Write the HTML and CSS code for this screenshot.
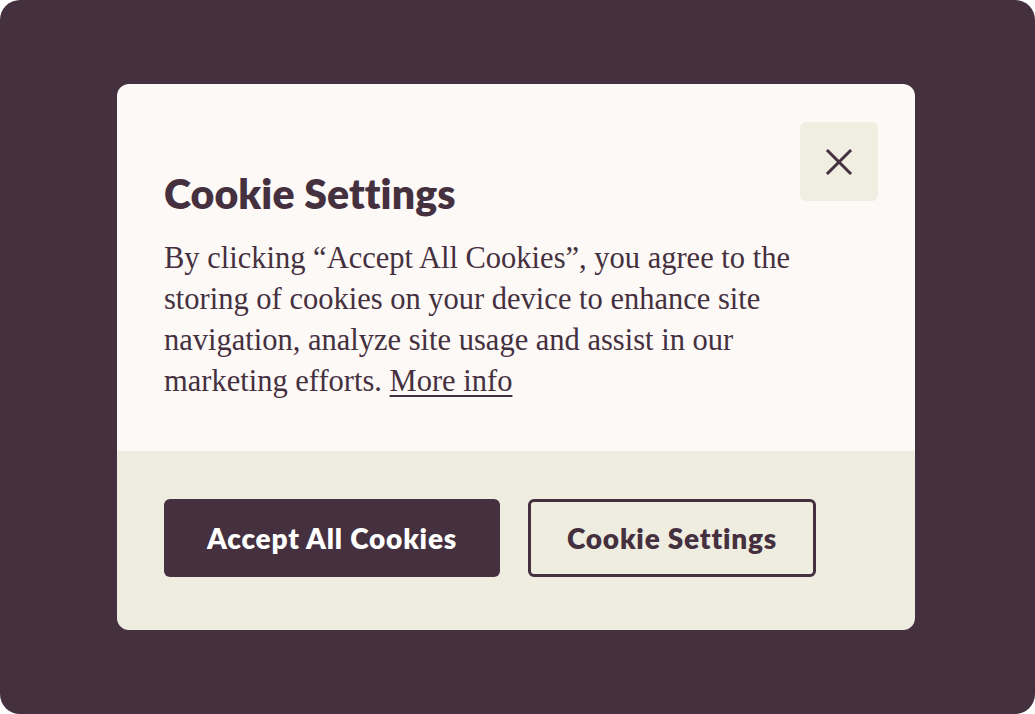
FILE: index.html
```html
<!DOCTYPE html>
<html lang="en">
<head>
    <meta charset="UTF-8">
    <title>Cookie Settings</title>
    <link rel="stylesheet" href="styles.css">
</head>
<body>
    <div class="backdrop">
        <div class="dialog">
            <div class="dialog-body">
                <div class="dialog-text">
                    <h1 class="title">Cookie Settings</h1>
                    <p class="message">By clicking “Accept All Cookies”, you agree to the storing of cookies on your device to enhance site navigation, analyze site usage and assist in our marketing efforts. <a href="#">More info</a></p>
                </div>
                <button class="close" aria-label="Close">
                    <svg width="28" height="28" viewBox="0 0 28 28" fill="none" stroke="#45303f" stroke-width="3" stroke-linecap="square">
                        <path d="M3 3 L25 25 M25 3 L3 25"/>
                    </svg>
                </button>
            </div>
            <div class="dialog-footer">
                <button class="btn btn-primary">Accept All Cookies</button>
                <button class="btn btn-outline">Cookie Settings</button>
            </div>
        </div>
    </div>
</body>
</html>
```

FILE: styles.css
```css
* {
    box-sizing: border-box;
    margin: 0;
    padding: 0;
}

body {
    background: #ffffff;
    width: 1035px;
    height: 714px;
    overflow: hidden;
}

.backdrop {
    width: 1035px;
    height: 714px;
    background: #45303f;
    border-radius: 20px;
    padding-top: 84px;
    padding-left: 117px;
}

.dialog {
    width: 798px;
    height: 546px;
    border-radius: 12px;
    overflow: hidden;
    display: flex;
    flex-direction: column;
}

.dialog-body {
    background: #fdf9f6;
    height: 367px;
    padding: 38px 37px 0 47px;
    display: flex;
    justify-content: space-between;
    align-items: flex-start;
}

.dialog-text {
    padding-top: 47px;
    width: 650px;
}

.title {
    font-family: Lato, "Open Sans", sans-serif;
    font-weight: 800;
    font-size: 41px;
    line-height: 50px;
    letter-spacing: 0.1px;
    color: #45303f;
}

.message {
    margin-top: 19px;
    font-family: "Liberation Serif", serif;
    font-size: 30.5px;
    line-height: 41px;
    color: #45303f;
}

.message a {
    color: #45303f;
    text-decoration: underline;
    text-decoration-thickness: 2px;
    text-underline-offset: 4px;
}

.close {
    width: 80px;
    height: 79px;
    margin-left: -1px;
    border: none;
    border-radius: 6px;
    background: #efeee0;
    display: flex;
    align-items: center;
    justify-content: center;
    cursor: pointer;
}

.dialog-footer {
    flex: 1;
    background: #efede0;
    padding: 48px 47px 0;
    display: flex;
    gap: 28px;
    align-items: flex-start;
}

.btn {
    height: 78px;
    border-radius: 6px;
    font-family: Lato, "Open Sans", sans-serif;
    font-weight: 800;
    font-size: 28px;
    letter-spacing: 0.8px;
    cursor: pointer;
}

.btn-primary {
    width: 336px;
    background: #45303f;
    color: #ffffff;
    border: none;
}

.btn-outline {
    width: 288px;
    background: transparent;
    color: #45303f;
    border: 3px solid #45303f;
}
```
